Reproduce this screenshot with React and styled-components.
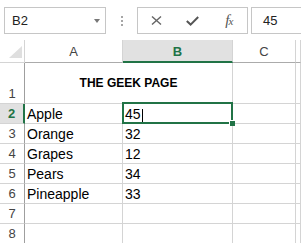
import React from 'react';
import styled, { createGlobalStyle } from 'styled-components';

const GREEN = '#217346';
const GRID = '#d4d4d4';

const Global = createGlobalStyle`
  html, body {
    margin: 0;
    padding: 0;
    background: #fff;
    overflow: hidden;
  }
  body {
    font-family: "Liberation Sans", Arial, sans-serif;
  }
`;

const Page = styled.div`
  width: 301px;
  height: 243px;
  overflow: hidden;
  background: #fff;
`;

const Toolbar = styled.div`
  box-sizing: border-box;
  height: 40px;
  display: flex;
  align-items: flex-start;
  padding: 7px 0 0 4px;
`;

const NameBox = styled.div`
  box-sizing: border-box;
  width: 102px;
  height: 27px;
  border: 1px solid #c6c6c6;
  display: flex;
  align-items: center;
  justify-content: space-between;
  padding: 0 5px 0 7px;
  font-size: 13px;
  color: #222;
`;

const Caret = styled.span`
  width: 0;
  height: 0;
  border-left: 3.5px solid transparent;
  border-right: 3.5px solid transparent;
  border-top: 4px solid #777;
`;

const Dots = styled.div`
  width: 31px;
  height: 27px;
  display: flex;
  flex-direction: column;
  align-items: center;
  justify-content: center;
  gap: 2px;
  padding-left: 1px;
  box-sizing: border-box;

  span {
    width: 2px;
    height: 2px;
    background: #a6a6a6;
  }
`;

const FuncBox = styled.div`
  box-sizing: border-box;
  width: 111px;
  height: 27px;
  border: 1px solid #c6c6c6;
  display: flex;
  align-items: center;
  padding-left: 0;
`;

const FuncButton = styled.div`
  width: 37px;
  height: 100%;
  display: flex;
  align-items: center;
  justify-content: center;
  color: #555;
`;

const Fx = styled.span`
  font-family: "Liberation Serif", "Times New Roman", serif;
  font-style: italic;
  font-size: 15px;
  color: #555;
  letter-spacing: -1px;

  small {
    font-size: 11px;
  }
`;

const InputBox = styled.div`
  box-sizing: border-box;
  flex: 1;
  height: 27px;
  margin-left: 3px;
  margin-right: -10px;
  border: 1px solid #c6c6c6;
  display: flex;
  align-items: center;
  padding-left: 11px;
  font-size: 13px;
  color: #222;
`;

const Sheet = styled.div`
  display: grid;
  grid-template-columns: 25px 98px 110px 63px 1fr;
  grid-template-rows: 23px 41px repeat(8, 20px);
`;

const Corner = styled.div`
  box-sizing: border-box;
  border-right: 1px solid ${GRID};
  border-bottom: 1px solid ${GRID};
  display: flex;
  align-items: flex-end;
  justify-content: flex-end;
  padding: 0 2px 4px 0;

  span {
    width: 0;
    height: 0;
    border-left: 13px solid transparent;
    border-bottom: 12px solid #dfdfdf;
  }
`;

const ColHead = styled.div`
  box-sizing: border-box;
  border-right: 1px solid ${GRID};
  border-bottom: ${(p) => (p.$active ? `2px solid ${GREEN}` : '1px solid #ababab')};
  background: ${(p) => (p.$active ? '#e1e1e1' : '#fff')};
  color: ${(p) => (p.$active ? GREEN : '#444')};
  font-weight: ${(p) => (p.$active ? 700 : 400)};
  font-size: 13px;
  display: flex;
  align-items: center;
  justify-content: center;
  padding-top: 1px;
`;

const RowHead = styled.div`
  box-sizing: border-box;
  border-right: ${(p) => (p.$active ? `2px solid ${GREEN}` : '1px solid #9f9f9f')};
  border-bottom: 1px solid ${GRID};
  background: ${(p) => (p.$active ? '#e1e1e1' : '#fff')};
  color: ${(p) => (p.$active ? GREEN : '#444')};
  font-weight: ${(p) => (p.$active ? 700 : 400)};
  font-size: 13px;
  line-height: 16px;
  display: flex;
  align-items: flex-end;
  justify-content: center;
  padding-bottom: 1px;
`;

const Cell = styled.div`
  box-sizing: border-box;
  position: relative;
  grid-column: ${(p) => (p.$span ? `span ${p.$span}` : 'auto')};
  border-right: 1px solid ${GRID};
  border-bottom: 1px solid ${GRID};
  font-size: ${(p) => (p.$bold ? '12px' : '14px')};
  font-weight: ${(p) => (p.$bold ? 700 : 400)};
  line-height: 16px;
  color: #000;
  display: flex;
  align-items: ${(p) => (p.$center ? 'center' : 'flex-end')};
  justify-content: ${(p) => (p.$center ? 'center' : 'flex-start')};
  padding: ${(p) => (p.$center ? '0' : '0 0 1px 2px')};
  white-space: nowrap;
`;

const Selection = styled.div`
  position: absolute;
  top: -2px;
  left: -1px;
  right: -1px;
  bottom: -1px;
  border: 2px solid ${GREEN};
  z-index: 2;
  pointer-events: none;
`;

const FillHandle = styled.div`
  position: absolute;
  right: -4px;
  bottom: -4px;
  width: 5px;
  height: 5px;
  background: ${GREEN};
  border: 1px solid #fff;
  border-right: none;
  border-bottom: none;
`;

const TextCursor = styled.span`
  display: inline-block;
  width: 1px;
  height: 15px;
  background: #000;
  margin-left: 1px;
  margin-bottom: -2px;
`;

const rows = [
  ['Apple', '45'],
  ['Orange', '32'],
  ['Grapes', '12'],
  ['Pears', '34'],
  ['Pineapple', '33'],
  ['', ''],
  ['', ''],
];

function CloseIcon() {
  return (
    <svg width="11" height="9" viewBox="0 0 11 9">
      <path d="M1 0.5 L10 8.5 M10 0.5 L1 8.5" stroke="#666" strokeWidth="1.4" fill="none" />
    </svg>
  );
}

function CheckIcon() {
  return (
    <svg width="13" height="10" viewBox="0 0 13 10">
      <path d="M0.8 5 L4.6 8.6 L12.2 1" stroke="#555" strokeWidth="2" fill="none" />
    </svg>
  );
}

export default function App() {
  return (
    <Page>
      <Global />
      <Toolbar>
        <NameBox>
          B2
          <Caret />
        </NameBox>
        <Dots>
          <span />
          <span />
          <span />
        </Dots>
        <FuncBox>
          <FuncButton><CloseIcon /></FuncButton>
          <FuncButton><CheckIcon /></FuncButton>
          <FuncButton><Fx>f<small>x</small></Fx></FuncButton>
        </FuncBox>
        <InputBox>45</InputBox>
      </Toolbar>
      <Sheet>
        <Corner><span /></Corner>
        <ColHead>A</ColHead>
        <ColHead $active>B</ColHead>
        <ColHead>C</ColHead>
        <ColHead />

        <RowHead>1</RowHead>
        <Cell $span={2} $bold $center>THE GEEK PAGE</Cell>
        <Cell />
        <Cell />

        {rows.map(([name, value], i) => (
          <React.Fragment key={i}>
            <RowHead $active={i === 0}>{i + 2}</RowHead>
            <Cell>{name}</Cell>
            <Cell>
              {value}
              {i === 0 && (
                <>
                  <TextCursor />
                  <Selection>
                    <FillHandle />
                  </Selection>
                </>
              )}
            </Cell>
            <Cell />
            <Cell />
          </React.Fragment>
        ))}
      </Sheet>
    </Page>
  );
}
